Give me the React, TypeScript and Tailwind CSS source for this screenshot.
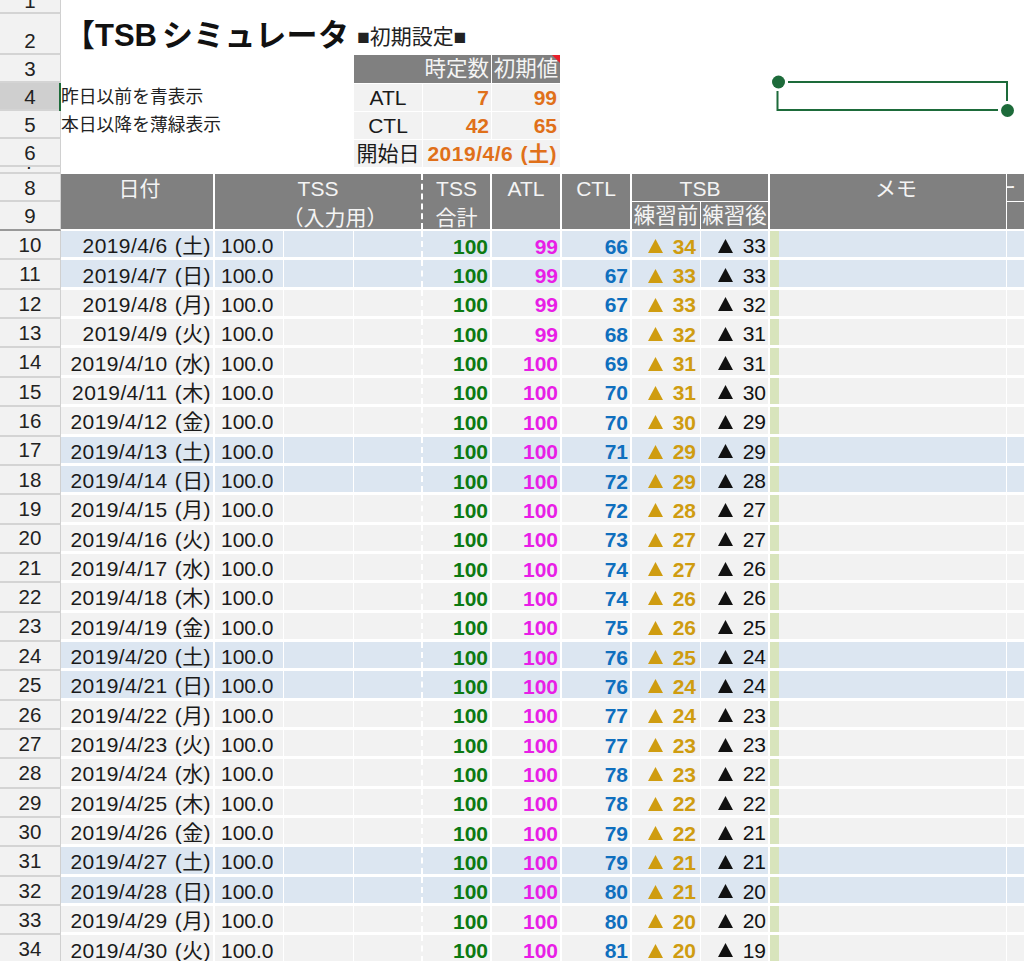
const days = ["土", "日", "月", "火", "水", "木", "金"];
const rows: [number, number, number, number][] = [
  [99, 66, 34, 33], [99, 67, 33, 33], [99, 67, 33, 32], [99, 68, 32, 31], [100, 69, 31, 31],
  [100, 70, 31, 30], [100, 70, 30, 29], [100, 71, 29, 29], [100, 72, 29, 28], [100, 72, 28, 27],
  [100, 73, 27, 27], [100, 74, 27, 26], [100, 74, 26, 26], [100, 75, 26, 25], [100, 76, 25, 24],
  [100, 76, 24, 24], [100, 77, 24, 23], [100, 77, 23, 23], [100, 78, 23, 22], [100, 78, 22, 22],
  [100, 79, 22, 21], [100, 79, 21, 21], [100, 80, 21, 20], [100, 80, 20, 20], [100, 81, 20, 19],
];

function Tri({ className }: { className: string }) {
  return (
    <svg width="15" height="14" viewBox="0 0 15 14" className={className}>
      <path d="M7.5 0 L15 14 H0 Z" fill="currentColor" />
    </svg>
  );
}

function RowHead({ n, selected, thick, row, className = "items-center pt-[2px]" }: { n: number; selected?: boolean; thick?: boolean; row: number; className?: string }) {
  return (
    <div
      style={{ gridRow: row, gridColumn: 1 }}
      className={`flex justify-center overflow-hidden border-b-2 border-r border-r-[#d0d0d0] text-[20.5px] leading-none text-[#222] ${className} ${
        selected ? "bg-[#cfcfcf]" : "bg-[#f2f2f2]"
      } ${thick ? "border-b-[#999999]" : "border-b-[#d4d4d4]"}`}
    >
      {n}
    </div>
  );
}

function Head({ col, row, className = "", children }: { col: string; row: string; className?: string; children?: React.ReactNode }) {
  return (
    <div style={{ gridColumn: col, gridRow: row }} className={`bg-[#808080] text-[#f4f4f4] overflow-hidden text-center whitespace-nowrap ${className}`}>
      {children}
    </div>
  );
}

export default function App() {
  return (
    <div className="h-[961px] w-[1024px] overflow-hidden bg-white relative font-['Liberation_Sans','Noto_Sans_CJK_JP',sans-serif] text-[21px] text-[#1a1a1a]">
      <div className="grid grid-cols-[61px_154px_69px_70px_69px_69px_70px_70px_69px_69px_237px_17px] grid-rows-[13.5px_41px_28px_28px_28px_28px_7.5px_28px_29.1px_repeat(25,29.35px)]">
        <RowHead n={1} row={1} className="items-end" />
        <RowHead n={2} row={2} className="items-end pb-[1px]" />
        {[3, 4, 5, 6].map((n) => (
          <RowHead key={n} n={n} row={n} selected={n === 4} className="items-center pt-[3px]" />
        ))}
        <RowHead n={7} row={7} className="items-end" />
        <RowHead n={8} row={8} />
        <RowHead n={9} row={9} thick />

        {/* title */}
        <div style={{ gridColumn: "2 / 12", gridRow: 2 }} className="flex items-end pl-[3px] whitespace-nowrap leading-[40px]">
          <span className="text-[31px] font-bold text-[#111] translate-y-[1px]">【TSB<span className="ml-[5px] tracking-[0.3px]">シミュレータ</span></span>
          <span className="ml-[8px] text-[21px] leading-[36px] text-[#222]">■初期設定■</span>
        </div>

        {/* settings notes */}
        <div style={{ gridColumn: "2 / 5", gridRow: 4 }} className="flex items-center pt-[2px] whitespace-nowrap text-[17.8px] text-[#222] border-l-2 border-[#1d6b3a] -ml-[2px]">昨日以前を青表示</div>
        <div style={{ gridColumn: "2 / 5", gridRow: 5 }} className="flex items-center pt-[2px] whitespace-nowrap text-[17.8px] text-[#222]">本日以降を薄緑表示</div>

        {/* settings table */}
        <div style={{ gridColumn: "5 / 7", gridRow: 3 }} className="bg-[#808080] mr-[1px] flex items-center justify-end pr-[2px] pt-[2px] text-[21.5px] text-[#f4f4f4] leading-none">時定数</div>
        <div style={{ gridColumn: 7, gridRow: 3 }} className="bg-[#808080] mr-[2px] relative flex items-center justify-center pt-[2px] text-[21.5px] text-[#f4f4f4] leading-none whitespace-nowrap overflow-hidden">
          初期値
          <span className="absolute right-0 top-0 h-0 w-0 border-l-[8px] border-t-[8px] border-l-transparent border-t-[#e8202a]" />
        </div>
        {([["ATL", 7, 99], ["CTL", 42, 65]] as const).map(([label, a, b], i) => (
          <div key={label} className="contents">
            <div style={{ gridColumn: 5, gridRow: 4 + i }} className="bg-[#f2f2f2] mr-[1px] mt-[1px] flex items-center justify-center pt-[1px] leading-none">{label}</div>
            <div style={{ gridColumn: 6, gridRow: 4 + i }} className="bg-[#f2f2f2] mr-[1px] mt-[1px] flex items-center justify-end pr-[2px] pt-[1px] font-bold text-[#e0701a] leading-none">{a}</div>
            <div style={{ gridColumn: 7, gridRow: 4 + i }} className="bg-[#f2f2f2] mr-[2px] mt-[1px] flex items-center justify-end pr-[3px] pt-[1px] font-bold text-[#e0701a] leading-none">{b}</div>
          </div>
        ))}
        <div style={{ gridColumn: 5, gridRow: 6 }} className="bg-[#f2f2f2] mr-[1px] mt-[1px] flex items-center justify-center pt-[1px] leading-none whitespace-nowrap">開始日</div>
        <div style={{ gridColumn: "6 / 8", gridRow: 6 }} className="bg-[#f2f2f2] mr-[2px] mt-[1px] flex items-center justify-end pr-[3px] pt-[1px] font-bold text-[#e0701a] leading-none whitespace-nowrap tracking-[0.5px] [word-spacing:1px]">2019/4/6 (土)</div>

        {/* table header */}
        <Head col="2" row="8 / 10" className="mr-[2px] mb-[2px] pl-[5px] leading-[30px]">日付</Head>
        <Head col="3 / 6" row="8 / 10" className="border-r-2 border-dashed border-white mb-[2px] leading-[29px]">
          <div>TSS</div>
          <div className="pl-[34px]">（入力用）</div>
        </Head>
        <Head col="6" row="8 / 10" className="mr-[2px] mb-[2px] leading-[29px]">
          <div>TSS</div>
          <div>合計</div>
        </Head>
        <Head col="7" row="8 / 10" className="mr-[2px] mb-[2px] leading-[30px]">ATL</Head>
        <Head col="8" row="8 / 10" className="mr-[2px] mb-[2px] leading-[30px]">CTL</Head>
        <Head col="9 / 11" row="8" className="mr-[2px] mb-[1px] leading-[30px]">TSB</Head>
        <Head col="9" row="9" className="mr-[1px] mb-[2px] text-[21.5px] leading-[28px]">練習前</Head>
        <Head col="10" row="9" className="mr-[2px] mb-[2px] text-[21.5px] leading-[28px]">練習後</Head>
        <Head col="11" row="8 / 10" className="mr-[1px] mb-[2px] pl-[16px] leading-[30px]">メモ</Head>
        <Head col="12" row="8" className="mb-[1px] leading-[28px] text-left">
          <span className="-ml-[12px] inline-block">ー</span>
        </Head>
        <Head col="12" row="9" className="mb-[2px]" />

        {/* body */}
        {rows.map(([atl, ctl, pre, post], i) => {
          const r = 10 + i;
          const bg = i % 7 < 2 ? "bg-[#dce6f1]" : "bg-[#f2f2f2]";
          const cell = `${bg} mb-[3px] flex items-center leading-none whitespace-nowrap overflow-hidden`;
          const text = `${cell} pt-[3px]`;
          const bold = `${cell} pt-[4px] font-bold`;
          return (
            <div key={r} className="contents">
              <RowHead n={r} row={r} className="items-center pt-[1px]" />
              <div style={{ gridColumn: 2, gridRow: r }} className={`${text} mr-[2px] justify-end pr-[2px] tracking-[0.4px] [word-spacing:1px]`}>2019/4/{6 + i} ({days[i % 7]})</div>
              <div style={{ gridColumn: 3, gridRow: r }} className={`${text} mr-[1px] pl-[6px]`}>100.0</div>
              <div style={{ gridColumn: 4, gridRow: r }} className={`${cell} mr-[1px]`} />
              <div style={{ gridColumn: 5, gridRow: r }} className={`${cell} border-r-2 border-dashed border-white`} />
              <div style={{ gridColumn: 6, gridRow: r }} className={`${bold} mr-[2px] justify-end pr-[2px] text-[#0c7a12]`}>100</div>
              <div style={{ gridColumn: 7, gridRow: r }} className={`${bold} mr-[2px] justify-end pr-[2px] text-[#e81ee6]`}>{atl}</div>
              <div style={{ gridColumn: 8, gridRow: r }} className={`${bold} mr-[2px] justify-end pr-[2px] text-[#0f6fbe]`}>{ctl}</div>
              <div style={{ gridColumn: 9, gridRow: r }} className={`${bold} mr-[1px] justify-end pr-[4px] text-[#cf9c10] gap-[10px]`}>
                <Tri className="shrink-0" />
                <span>{pre}</span>
              </div>
              <div style={{ gridColumn: 10, gridRow: r }} className={`${text} mr-[2px] justify-end pr-[2px] gap-[10px] text-[#111]`}>
                <Tri className="shrink-0" />
                <span>{post}</span>
              </div>
              <div style={{ gridColumn: 11, gridRow: r }} className={`${cell} mr-[1px]`}>
                <div className="h-full w-[9px] bg-[#d8e4bc]" />
              </div>
              <div style={{ gridColumn: 12, gridRow: r }} className={cell} />
            </div>
          );
        })}
      </div>

      {/* selection frame */}
      <svg className="absolute left-[770px] top-[74px]" width="246" height="44" viewBox="0 0 246 44" fill="none">
        <path d="M18 8 H237 V27 M228 36 H7.5 V17" stroke="#1d6b3a" strokeWidth="2" />
        <circle cx="8.5" cy="8" r="6.5" fill="#1d6b3a" />
        <circle cx="237.5" cy="36.5" r="6.5" fill="#1d6b3a" />
      </svg>
    </div>
  );
}
